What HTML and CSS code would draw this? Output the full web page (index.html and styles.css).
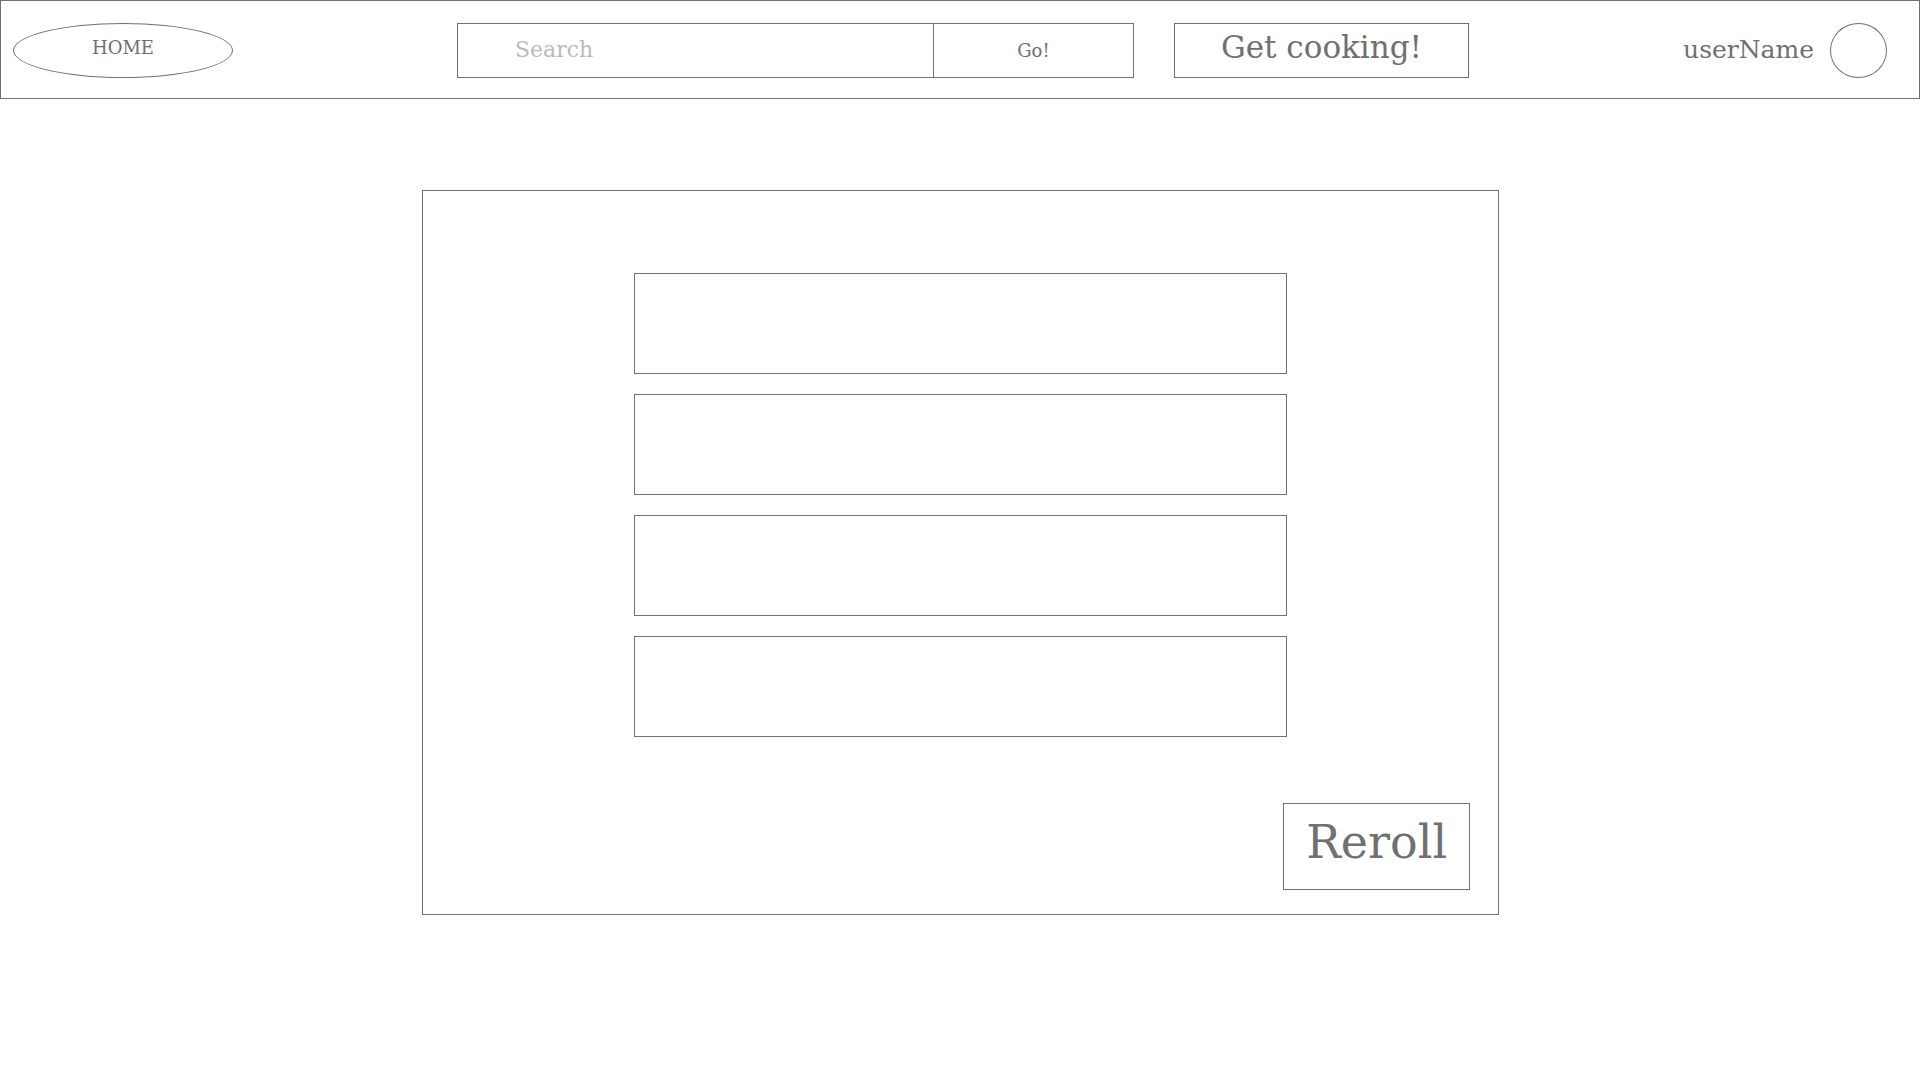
FILE: index.html
```html
<!DOCTYPE html>
<html lang="en">
<head>
  <meta charset="utf-8">
  <meta name="viewport" content="width=device-width, initial-scale=1">
  <title>Get cooking!</title>
  <link rel="stylesheet" href="styles.css">
</head>
<body>
  <header class="topbar">
    <nav>
      <a class="home" href="#">HOME</a>
    </nav>
    <form class="search" role="search">
      <input class="search-input" type="search" placeholder="Search" aria-label="Search">
      <button class="search-go" type="submit">Go!</button>
    </form>
    <div class="cook">
      <button class="cook-button" type="button">Get cooking!</button>
    </div>
    <a class="user" href="#">
      <span class="user-name">userName</span>
      <span class="avatar"></span>
    </a>
  </header>
  <main class="card">
    <ul class="recipes">
      <li class="recipe"></li>
      <li class="recipe"></li>
      <li class="recipe"></li>
      <li class="recipe"></li>
    </ul>
    <button class="reroll" type="button">Reroll</button>
  </main>
</body>
</html>
```
FILE: styles.css
```css
* {
  box-sizing: border-box;
}

body {
  margin: 0;
  background: #fff;
  color: #707070;
  font-family: Rockwell, "DejaVu Serif", serif;
  font-size: 18px;
}

a {
  color: inherit;
  text-decoration: none;
}

button,
input {
  margin: 0;
  border: 1px solid #707070;
  border-radius: 0;
  background: #fff;
  color: inherit;
  font: inherit;
}

/* Top bar */
.topbar {
  display: grid;
  grid-template-columns: 444fr 677fr 335fr 418fr;
  padding: 22px 32px 20px 12px;
  border: 1px solid #707070;
}

.home {
  display: flex;
  align-items: center;
  justify-content: center;
  width: 220px;
  height: 55px;
  padding-bottom: 6px;
  border: 1px solid #707070;
  border-radius: 50%;
}

.search {
  display: flex;
  height: 55px;
}

.search-input {
  flex: 1;
  min-width: 0;
  padding: 0 16px 2px 57px;
  border-right: 0;
  appearance: none;
  font-size: 22px;
}

.search-input::placeholder {
  color: #bbb;
  opacity: 1;
}

.search-go {
  width: 29.7%;
}

.cook {
  display: flex;
  height: 55px;
  padding-left: 40px;
}

.cook-button {
  flex: 1;
  padding: 0 0 8px;
  font-size: 31px;
  white-space: nowrap;
}

.user {
  display: flex;
  align-items: center;
  justify-content: flex-end;
  gap: 16px;
}

.user-name {
  padding-bottom: 2px;
  font-size: 25px;
}

.avatar {
  width: 57px;
  height: 55px;
  border: 1px solid #707070;
  border-radius: 50%;
}

/* Recipe picker */
.card {
  display: flex;
  flex-direction: column;
  gap: 66px;
  width: 56.08%;
  margin: 91px auto 91px 22%;
  padding: 82px 28px 24px;
  border: 1px solid #707070;
}

.recipes {
  display: grid;
  gap: 20px;
  width: 64.1%;
  margin: 0 auto;
  padding: 0;
  list-style: none;
}

.recipe {
  min-height: 101px;
  border: 1px solid #707070;
}

.reroll {
  align-self: flex-end;
  width: 187px;
  height: 87px;
  padding: 0 0 10px;
  font-size: 46px;
}
```
